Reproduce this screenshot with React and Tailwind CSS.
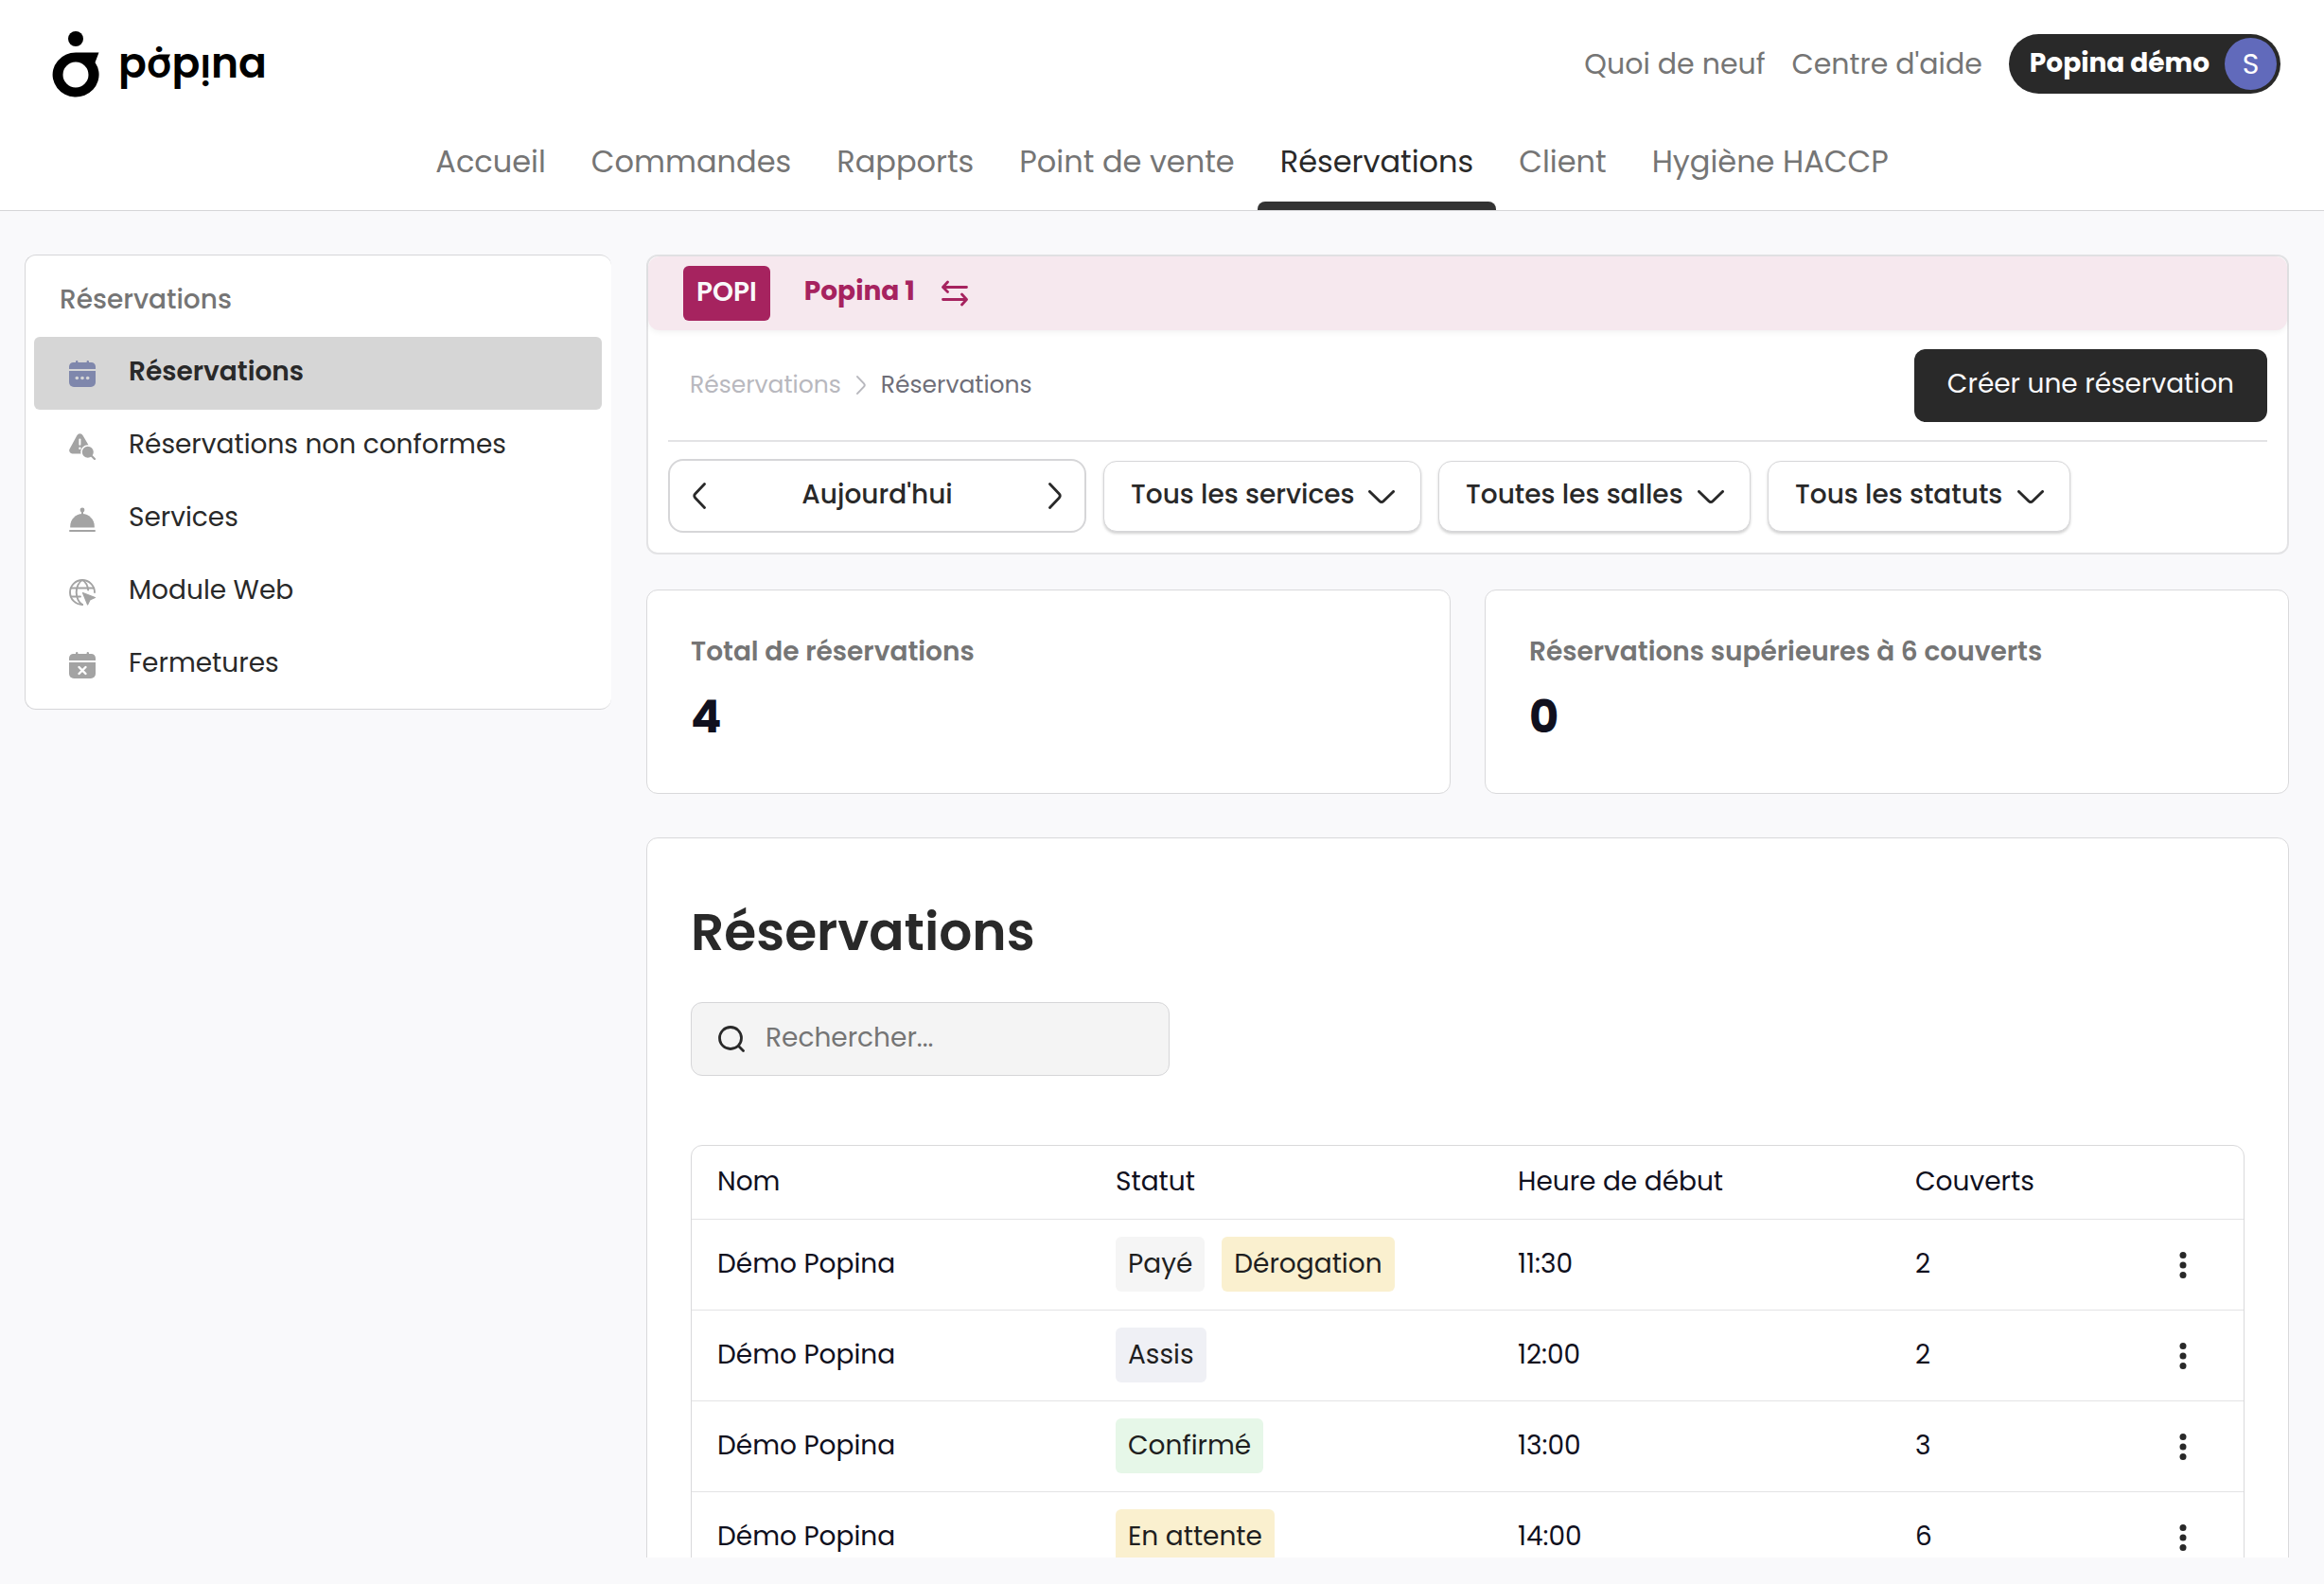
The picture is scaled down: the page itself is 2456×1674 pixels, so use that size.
import { useState } from 'react';

const NAV = ['Accueil', 'Commandes', 'Rapports', 'Point de vente', 'Réservations', 'Client', 'Hygiène HACCP'];

const BADGES = {
  'Payé': 'bg-[#f5f5f5]',
  'Dérogation': 'bg-[#faf0cf]',
  'Assis': 'bg-[#eff0f5]',
  'Confirmé': 'bg-[#e6f7e8]',
  'En attente': 'bg-[#faf0cf]',
};

const BOOKINGS = [
  { id: 1, name: 'Démo Popina', status: ['Payé', 'Dérogation'], time: '11:30', seats: 2 },
  { id: 2, name: 'Démo Popina', status: ['Assis'], time: '12:00', seats: 2 },
  { id: 3, name: 'Démo Popina', status: ['Confirmé'], time: '13:00', seats: 3 },
  { id: 4, name: 'Démo Popina', status: ['En attente'], time: '14:00', seats: 6 },
];

function CalendarIcon({ children }) {
  return (
    <svg className="w-7 h-7" viewBox="0 0 28 28" fill="currentColor">
      <path d="M0 9V6.500a4.500 4.500 0 0 1 4.500-4.500H7v-.8a1.200 1.200 0 0 1 2.400 0V2h9.200v-.8a1.200 1.200 0 0 1 2.400 0V2h2.500A4.500 4.500 0 0 1 28 6.500V9z" />
      <path d="M0 11h28v12a5 5 0 0 1-5 5H5a5 5 0 0 1-5-5z" />
      {children}
    </svg>
  );
}

const DotsCalendar = () => (
  <CalendarIcon>
    <g className="text-[#d6d6d6]">
      <circle cx="8.300" cy="18.500" r="1.800" fill="currentColor" />
      <circle cx="14" cy="18.500" r="1.800" fill="currentColor" />
      <circle cx="19.700" cy="18.500" r="1.800" fill="currentColor" />
    </g>
  </CalendarIcon>
);

const ClosedCalendar = () => (
  <CalendarIcon>
    <path d="M10.500 16l7 7M17.500 16l-7 7" stroke="#fff" strokeWidth="2.400" strokeLinecap="round" />
  </CalendarIcon>
);

const WarningSearch = () => (
  <svg className="w-7 h-7" viewBox="0 0 28 28" fill="currentColor">
    <path d="M8.300 2.200a3.600 3.600 0 0 1 6.300 0l6 10.300-2.500 8.900H3.600A3.300 3.300 0 0 1 .6 16.500z" />
    <path d="M11.400 6.500v5.300" stroke="#fff" strokeWidth="2" strokeLinecap="round" />
    <circle cx="11.400" cy="15.800" r="1.200" fill="#fff" />
    <circle cx="19.800" cy="19.800" r="6.800" stroke="#fff" strokeWidth="1.600" />
    <path d="M24 24l3 3" stroke="currentColor" strokeWidth="2.200" strokeLinecap="round" />
  </svg>
);

const Bell = () => (
  <svg className="w-7 h-7" viewBox="0 0 28 28" fill="currentColor">
    <circle cx="14" cy="4" r="2.400" />
    <path d="M13 5h2v5h-2z" />
    <path d="M1.200 22.500v-1.300C1.200 14 7 8 14 8s12.800 6 12.800 13.200v1.300z" />
    <rect x="0" y="25" width="28" height="2" rx="1" />
  </svg>
);

const WebCursor = () => (
  <svg className="w-7 h-7" viewBox="0 0 28 28" fill="none" stroke="currentColor" strokeWidth="1.900" strokeLinecap="round">
    <path d="M27 14A13 13 0 1 0 14 27" />
    <path d="M14 27c-3.700-2-6.300-7.500-6.300-13S10.300 3 14 1c3.200 1.800 5.600 6 6.200 10.500" />
    <path d="M2.500 9.500h23M2.500 18.500h9.500" />
    <path d="M14.500 14.500l13 5-5.500 2.400L19.600 27z" fill="currentColor" strokeWidth="1.200" strokeLinejoin="round" />
  </svg>
);

const MENU = [
  { label: 'Réservations', Icon: DotsCalendar },
  { label: 'Réservations non conformes', Icon: WarningSearch },
  { label: 'Services', Icon: Bell },
  { label: 'Module Web', Icon: WebCursor },
  { label: 'Fermetures', Icon: ClosedCalendar },
];

function DownChevron({ className }) {
  return (
    <svg className={className} viewBox="0 0 28 15" fill="none" stroke="currentColor" strokeWidth="3" strokeLinecap="round" strokeLinejoin="round">
      <path d="M1.500 1.500l10.300 10a3.200 3.200 0 0 0 4.400 0l10.300-10" />
    </svg>
  );
}

function SideChevron({ className }) {
  return (
    <svg className={className} viewBox="0 0 14 28" fill="none" stroke="currentColor" strokeWidth="2.800" strokeLinecap="round" strokeLinejoin="round">
      <path d="M1.500 1.500l9.700 10.300a3.200 3.200 0 0 1 0 4.400L1.500 26.500" />
    </svg>
  );
}

function Logo() {
  return (
    <svg className="w-[240px] h-[76px]" viewBox="0 0 240 76" aria-label="Popina">
      <circle cx="25" cy="8" r="8" />
      <path fillRule="evenodd" d="M25 22.500h24.500l-4 10.500a24.500 23.500 0 1 1-20.500-10.500zM25 32.500a13.500 13.500 0 1 0 0 27 13.500 13.500 0 0 0 0-27z" />
      <text x="70" y="49" className="text-[44px] font-semibold">pȯpı̣na</text>
      <path d="M112 24.500h13l-3 6z" />
    </svg>
  );
}

function FilterSelect({ label, value, className }) {
  return (
    <div className={`relative ${className}`}>
      <select
        aria-label={label}
        className="appearance-none w-full h-[75px] pl-7 pb-0.5 bg-white border border-[#d6d6d8] rounded-[14px] shadow-[0_2px_3px_rgba(0,0,0,0.18)] font-medium text-[#292929] outline-none"
      >
        <option>{value}</option>
      </select>
      <DownChevron className="absolute right-7 top-[31px] w-7 h-[15px] pointer-events-none" />
    </div>
  );
}

function StatCard({ label, value }) {
  return (
    <div className="h-[216px] px-[46px] pt-11 bg-white border border-[#d9d9db] rounded-xl">
      <p className="font-semibold leading-[42px] text-[#757575]">{label}</p>
      <p className="mt-3 text-[48px] leading-[72px] font-bold text-[#10101e]">{value}</p>
    </div>
  );
}

export default function App() {
  const [search, setSearch] = useState('');

  const rows = BOOKINGS.filter((b) => b.name.toLowerCase().includes(search.toLowerCase()));

  return (
    <div className="flex flex-col h-screen bg-[#f9f9fb] font-[Poppins,Inter,sans-serif] [font-feature-settings:'cv11'] text-[28px] text-[#292929]">

      <header className="shrink-0 bg-white border-b border-[#d6d6d8]">
        <div className="flex items-center justify-between h-[134px] pl-[55px] pr-[46px]">
          <a href="#" className="mt-2"><Logo /></a>
          <div className="flex items-center gap-7 text-[30px] text-[#757575]">
            <a href="#">Quoi de neuf</a>
            <a href="#">Centre d'aide</a>
            <button className="flex items-center gap-4 h-[63px] pl-[22px] pr-1 rounded-full bg-[#292929] text-white">
              <span className="text-[28px] font-bold">Popina démo</span>
              <span className="flex items-center justify-center w-[55px] h-[55px] rounded-full bg-[#616abb]">S</span>
            </button>
          </div>
        </div>
        <nav className="flex justify-center h-[88px] text-[32px]">
          {NAV.map((item) => (
            <a
              key={item}
              href="#"
              className={`relative px-6 pt-[13px] ${item === 'Réservations' ? 'text-[#292929]' : 'text-[#757575]'}`}
            >
              {item}
              {item === 'Réservations' && <span className="absolute left-0 bottom-0 w-full h-[9px] rounded-t-lg bg-[#333]"></span>}
            </a>
          ))}
        </nav>
      </header>

      <div className="flex flex-1 min-h-0 items-start gap-[37px] pt-[46px] pl-[26px] pr-[37px] pb-7">

        <aside className="shrink-0 w-[620px] bg-white border border-r-0 border-[#d6d6d8] rounded-xl pl-[9px] pr-[10px] pb-2">
          <h2 className="h-[86px] pl-[27px] pt-[26px] leading-[42px] font-medium text-[#757575]">Réservations</h2>
          <nav>
            {MENU.map(({ label, Icon }, i) => (
              <a
                key={label}
                href="#"
                className={`flex items-center gap-[35px] h-[77px] pl-[37px] rounded-md ${i === 0 ? 'bg-[#d6d6d6] font-semibold' : ''}`}
              >
                <span className={i === 0 ? 'text-[#7f87ac]' : 'text-[#a3a3a3]'}><Icon /></span>
                <span className="pb-1">{label}</span>
              </a>
            ))}
          </nav>
        </aside>

        <main className="flex flex-col flex-1 min-w-0 h-full overflow-hidden">

          <section className="shrink-0 bg-white border-2 border-[#e3e3e5] rounded-xl">
            <div className="flex items-center h-[78px] pl-[37px] rounded-xl bg-[#f6e8ee] text-[#a6235f] font-bold shadow-[0_2px_6px_rgba(0,0,0,0.06)]">
              <span className="flex items-center h-[58px] px-[14px] pb-0.5 rounded-md bg-[#a6235f] text-[#f9f9fb] font-semibold">POPI</span>
              <span className="ml-9 pb-1">Popina 1</span>
              <button className="ml-7" aria-label="Changer d'établissement">
                <svg className="w-7 h-7" viewBox="0 0 28 28" fill="none" stroke="currentColor" strokeWidth="2.800" strokeLinecap="round" strokeLinejoin="round">
                  <path d="M26.500 7.500H2M6.500 2L1.500 7.500l5 5" />
                  <path d="M1.500 20.500H26M21.500 15l5 5.500-5 5.500" />
                </svg>
              </button>
            </div>

            <div className="mx-[21px] flex items-center justify-between h-[118px] border-b-2 border-[#e3e3e5]">
              <div className="flex items-center pl-[23px] text-[25px] text-[#6e6e78]">
                <a href="#" className="text-[#b8b8be]">Réservations</a>
                <SideChevron className="mx-4 w-[10px] h-5 text-[#b8b8be]" />
                <span>Réservations</span>
              </div>
              <button className="h-[77px] px-[35px] pb-0.5 rounded-xl bg-[#292929] text-[#f9f9fb]">Créer une réservation</button>
            </div>

            <div className="mx-[21px] flex items-center gap-[18px] mt-[18px] mb-[21px]">
              <div className="flex items-center justify-between w-[442px] h-[78px] px-6 bg-white border-2 border-[#d6d6d8] rounded-2xl">
                <button aria-label="Jour précédent"><SideChevron className="w-[14px] h-7 rotate-180" /></button>
                <span className="pb-0.5 font-medium">Aujourd'hui</span>
                <button aria-label="Jour suivant"><SideChevron className="w-[14px] h-7" /></button>
              </div>
              <FilterSelect label="Services" value="Tous les services" className="w-[336px]" />
              <FilterSelect label="Salles" value="Toutes les salles" className="w-[330px]" />
              <FilterSelect label="Statuts" value="Tous les statuts" className="w-[320px]" />
            </div>
          </section>

          <div className="shrink-0 grid grid-cols-2 gap-9 mt-[37px]">
            <StatCard label="Total de réservations" value="4" />
            <StatCard label="Réservations supérieures à 6 couverts" value="0" />
          </div>

          <section className="shrink-0 mt-[46px] px-[46px] pt-[61px] pb-12 bg-white border border-[#d9d9db] rounded-xl">
            <h1 className="text-[55px] leading-[76px] font-semibold">Réservations</h1>

            <label className="flex items-center gap-[22px] mt-9 w-[506px] h-[78px] px-7 bg-[#f4f4f4] border border-[#d6d6d8] rounded-xl">
              <svg className="shrink-0 w-7 h-7" viewBox="0 0 28 28" fill="none" stroke="currentColor" strokeWidth="2.800" strokeLinecap="round">
                <circle cx="13" cy="13" r="11.500" />
                <path d="M21.500 21.500l5 5" />
              </svg>
              <input
                type="text"
                aria-label="Rechercher"
                placeholder="Rechercher..."
                value={search}
                onChange={(e) => setSearch(e.target.value)}
                className="w-full pb-0.5 bg-transparent outline-none placeholder:text-[#757575]"
              />
            </label>

            <div className="mt-[73px] border border-[#d9d9db] rounded-xl overflow-hidden text-[#10101e]">
              <table className="w-full table-fixed text-left">
                <thead>
                  <tr className="h-[77px] border-b border-[#e3e3e5]">
                    <th className="w-[420px] pl-[27px] font-normal">Nom</th>
                    <th className="w-[426px] pl-7 font-normal">Statut</th>
                    <th className="w-[420px] pl-[27px] font-normal">Heure de début</th>
                    <th className="pl-[27px] font-normal">Couverts</th>
                    <th className="w-[128px]"></th>
                  </tr>
                </thead>
                <tbody>
                  {rows.map((b) => (
                    <tr key={b.id} className="h-24 border-b border-[#e3e3e5]">
                      <td className="pl-[27px]">{b.name}</td>
                      <td className="pl-7">
                        <div className="flex gap-[18px] text-[#1f1f1f]">
                          {b.status.map((s) => (
                            <span key={s} className={`flex items-center h-[58px] px-[13px] rounded-md ${BADGES[s]}`}>{s}</span>
                          ))}
                        </div>
                      </td>
                      <td className="pl-[27px]">{b.time}</td>
                      <td className="pl-[27px]">{b.seats}</td>
                      <td className="text-center">
                        <button className="align-middle" aria-label="Actions">
                          <svg className="w-7 h-7 text-[#292929]" viewBox="0 0 28 28" fill="currentColor">
                            <circle cx="14" cy="3.500" r="3.500" />
                            <circle cx="14" cy="14" r="3.500" />
                            <circle cx="14" cy="24.500" r="3.500" />
                          </svg>
                        </button>
                      </td>
                    </tr>
                  ))}
                </tbody>
              </table>
            </div>
          </section>
        </main>
      </div>
    </div>
  );
}
